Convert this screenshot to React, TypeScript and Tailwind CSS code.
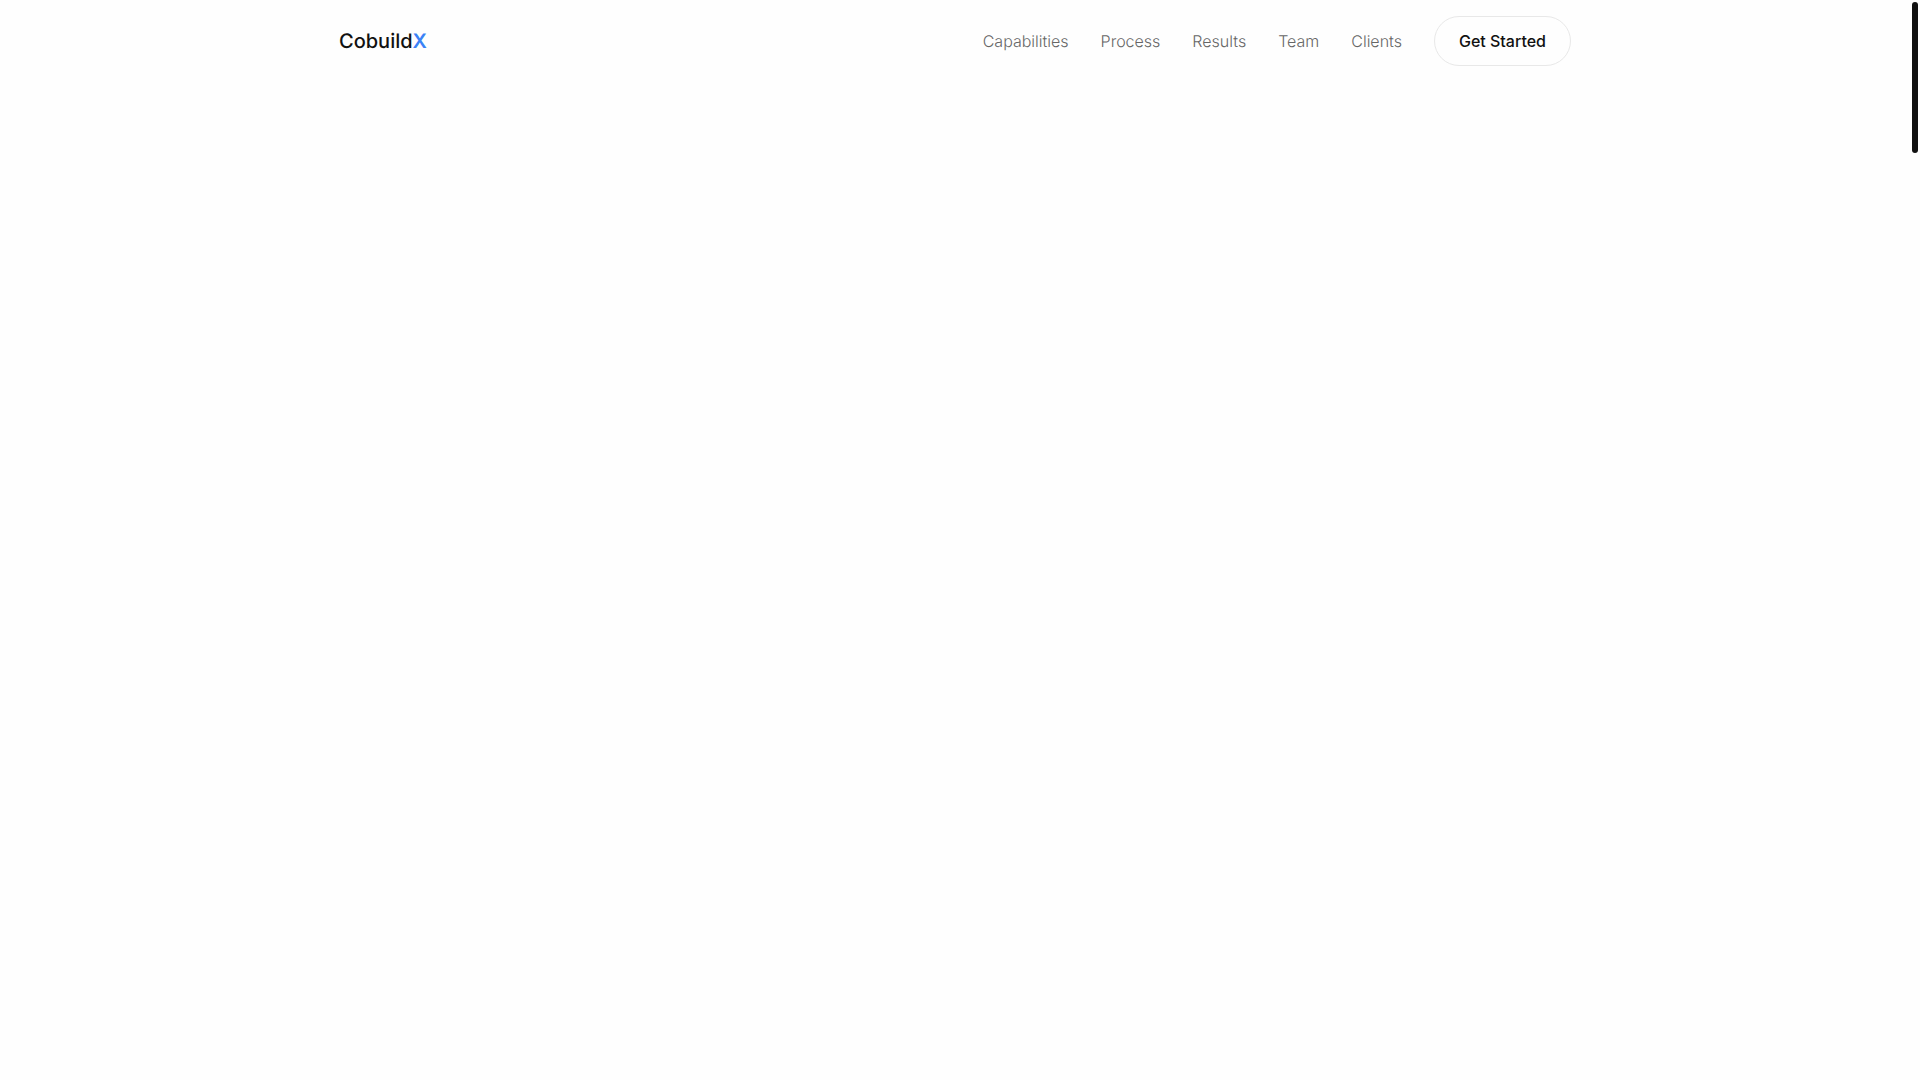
const navLinks = [
  { label: "Capabilities", href: "#capabilities" },
  { label: "Process", href: "#process" },
  { label: "Results", href: "#results" },
  { label: "Team", href: "#team" },
  { label: "Clients", href: "#clients" },
];

function Header() {
  return (
    <header className="mx-auto flex w-full max-w-7xl items-center justify-between px-6 py-4">
      <a href="#" className="text-xl font-medium">
        Cobuild<span className="font-semibold text-[#3b82f6]">X</span>
      </a>
      <nav className="flex items-center gap-8">
        {navLinks.map((link) => (
          <a
            key={link.href}
            href={link.href}
            className="font-light text-[#666666] hover:text-[#111111]"
          >
            {link.label}
          </a>
        ))}
        <button
          type="button"
          className="rounded-full border border-[#e8e8e8] px-6 py-3 font-medium"
        >
          Get Started
        </button>
      </nav>
    </header>
  );
}

export default function App() {
  return (
    <div className="flex h-screen bg-[#fefefe] font-['Inter',sans-serif] text-base text-[#111111] antialiased [font-optical-sizing:none] [text-rendering:geometricPrecision]">
      <div className="min-w-0 flex-1">
        <Header />
        <main />
      </div>
      {/* Scroll bar */}
      <div className="w-[10px] shrink-0 p-0.5" aria-hidden="true">
        <div className="h-[151px] rounded-full bg-[#111111]" />
      </div>
    </div>
  );
}
